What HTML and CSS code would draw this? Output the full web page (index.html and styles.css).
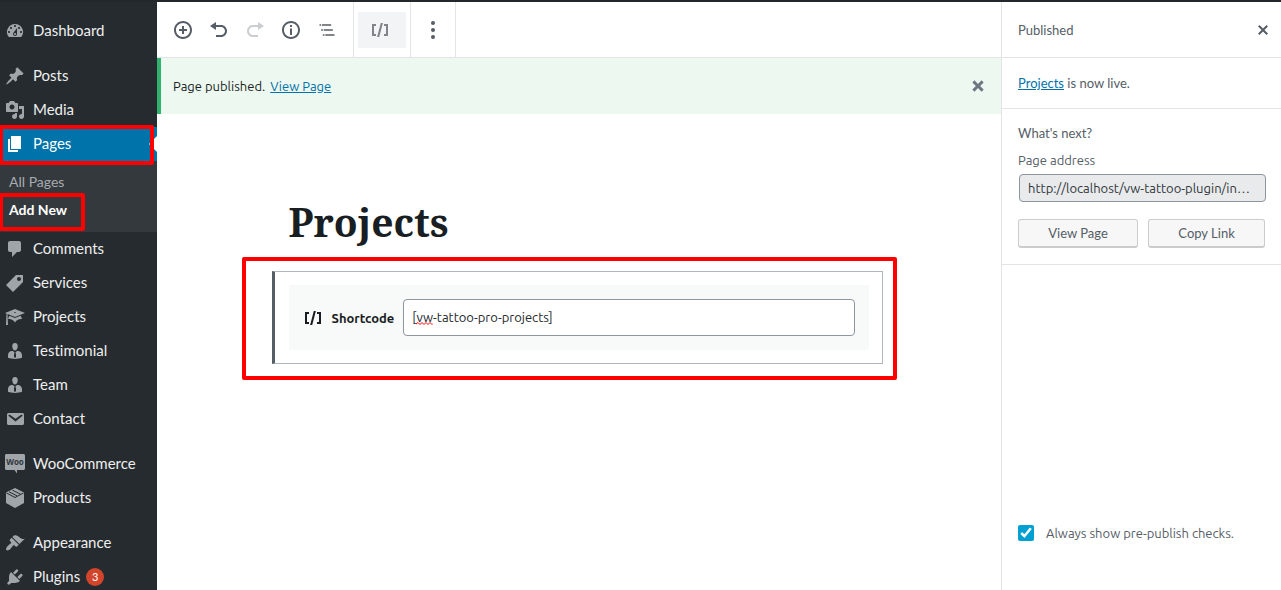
FILE: index.html
```html
<!DOCTYPE html>
<html lang="en">

<head>
    <meta charset="UTF-8">
    <meta name="viewport" content="width=device-width, initial-scale=1.0">
    <title>Edit Page</title>
    <link rel="stylesheet" href="styles.css">
</head>

<body>

    <div class="admin">
        <nav class="menu">
            <ul class="menu-group">
                <li><a class="menu-item" href="#">
                    <svg class="icon" viewBox="0 0 20 20"><path d="M3.76 16h12.48A7.998 7.998 0 0 0 10 3a7.998 7.998 0 0 0-6.24 13zM10 4c.55 0 1 .45 1 1s-.45 1-1 1-1-.45-1-1 .45-1 1-1zM6 6c.55 0 1 .45 1 1s-.45 1-1 1-1-.45-1-1 .45-1 1-1zm8 0c.55 0 1 .45 1 1s-.45 1-1 1-1-.45-1-1 .45-1 1-1zm-5.37 5.55L12 7v6c0 1.1-.9 2-2 2s-2-.9-2-2c0-.57.24-1.08.63-1.45zM4 10c.55 0 1 .45 1 1s-.45 1-1 1-1-.45-1-1 .45-1 1-1zm12 0c.55 0 1 .45 1 1s-.45 1-1 1-1-.45-1-1 .45-1 1-1zm-5 3c0-.55-.45-1-1-1s-1 .45-1 1 .45 1 1 1 1-.45 1-1z"/></svg>
                    <span>Dashboard</span></a></li>
            </ul>
            <ul class="menu-group">
                <li><a class="menu-item" href="#">
                    <svg class="icon" viewBox="0 0 20 20"><path d="M10.44 3.02l1.82-1.82 6.36 6.35-1.83 1.82c-1.05-.68-2.48-.57-3.41.36l-.75.75c-.92.93-1.04 2.35-.35 3.41l-1.83 1.82-2.41-2.41-2.8 2.79c-.42.42-3.38 2.71-3.8 2.29s1.86-3.39 2.28-3.81l2.79-2.79L4.1 9.36l1.83-1.82c1.05.69 2.48.57 3.4-.36l.75-.75c.93-.92 1.05-2.35.36-3.41z"/></svg>
                    <span>Posts</span></a></li>
                <li><a class="menu-item" href="#">
                    <svg class="icon" viewBox="0 0 20 20"><path d="M13 11V4c0-.55-.45-1-1-1h-1.67L9 1H5L3.67 3H2c-.55 0-1 .45-1 1v7c0 .55.45 1 1 1h10c.55 0 1-.45 1-1zM7 4.5c1.38 0 2.5 1.12 2.5 2.5S8.38 9.5 7 9.5 4.5 8.38 4.5 7 5.62 4.5 7 4.5zM14 6h5v10.5c0 1.38-1.12 2.5-2.5 2.5S14 17.88 14 16.5s1.12-2.5 2.5-2.5c.17 0 .34.02.5.05V9h-3V6zm-4 8.05V13h2v3.5c0 1.38-1.12 2.5-2.5 2.5S7 17.88 7 16.5 8.12 14 9.5 14c.17 0 .34.02.5.05z"/></svg>
                    <span>Media</span></a></li>
                <li class="current">
                    <a class="menu-item" href="#">
                    <svg class="icon" viewBox="0 0 20 20"><path d="M6 15V2h10v13H6zm-1 1h8v2H3V5h2v11z"/></svg>
                    <span>Pages</span></a>
                    <div class="mark mark-pages"></div>
                    <ul class="submenu">
                        <li><a href="#">All Pages</a></li>
                        <li class="active"><a href="#">Add New</a><div class="mark mark-add"></div></li>
                    </ul>
                </li>
                <li><a class="menu-item" href="#">
                    <svg class="icon" viewBox="0 0 20 20"><path d="M5 2h9c1.1 0 2 .9 2 2v7c0 1.1-.9 2-2 2h-2l-5 5v-5H5c-1.1 0-2-.9-2-2V4c0-1.1.9-2 2-2z"/></svg>
                    <span>Comments</span></a></li>
                <li><a class="menu-item" href="#">
                    <svg class="icon" viewBox="0 0 20 20"><path d="M11 2h7v7L8 19l-7-7zm3 6c1.1 0 2-.9 2-2s-.9-2-2-2-2 .9-2 2 .9 2 2 2z"/></svg>
                    <span>Services</span></a></li>
                <li><a class="menu-item" href="#">
                    <svg class="icon" viewBox="0 0 20 20"><path d="M10 10L2.54 7.02 3 18H1l.48-11.41L0 6l10-4 10 4zm0-5c-.55 0-1 .22-1 .5s.45.5 1 .5 1-.22 1-.5-.45-.5-1-.5zm0 6l5.57-2.23c.71.94 1.2 2.07 1.36 3.3-.3-.04-.61-.07-.93-.07-2.55 0-4.78 1.37-6 3.41C8.78 13.37 6.55 12 4 12c-.32 0-.63.03-.93.07.16-1.23.65-2.36 1.36-3.3z"/></svg>
                    <span>Projects</span></a></li>
                <li><a class="menu-item" href="#">
                    <svg class="icon" viewBox="0 0 20 20"><path d="M10 2c-2 0-3 1.600-2.700 4 .3 1.900 1.300 3.500 2.700 3.500s2.400-1.600 2.700-3.500C13 3.600 12 2 10 2zM8 10l1.670 1.670L9 13v3l1.020 1.080L11 16v-3l-.68-1.330L11.970 10c.77 0 2.200.07 2.900.52 1.500 1 2.130 2.300 2.130 3.860v2.490c-1.800.7-4.500 1.130-7 1.130s-5.200-.43-7-1.130v-2.490c0-1.600.5-2.900 1.960-3.830C5.660 10.120 7.190 10 8 10z"/></svg>
                    <span>Testimonial</span></a></li>
                <li><a class="menu-item" href="#">
                    <svg class="icon" viewBox="0 0 20 20"><path d="M10 2c-2 0-3 1.600-2.700 4 .3 1.900 1.300 3.500 2.700 3.500s2.400-1.600 2.700-3.500C13 3.600 12 2 10 2zM8 10l1.670 1.670L9 13v3l1.020 1.080L11 16v-3l-.68-1.330L11.970 10c.77 0 2.200.07 2.900.52 1.500 1 2.130 2.300 2.130 3.860v2.490c-1.800.7-4.500 1.130-7 1.130s-5.200-.43-7-1.130v-2.490c0-1.600.5-2.900 1.960-3.830C5.660 10.120 7.190 10 8 10z"/></svg>
                    <span>Team</span></a></li>
                <li><a class="menu-item" href="#">
                    <svg class="icon" viewBox="0 0 20 20"><path d="M3.500 4h14c.8 0 1.500.7 1.500 1.500v9c0 .8-.7 1.500-1.500 1.500h-14c-.8 0-1.500-.7-1.500-1.500v-9C2 4.700 2.700 4 3.500 4zm7 8.600l6.800-5.500c.3-.3.4-.7.100-1.100-.3-.4-.8-.4-1.200-.2l-5.700 3.900-5.700-3.900c-.4-.2-.9-.2-1.200.2-.3.4-.1.800.1 1.100z"/></svg>
                    <span>Contact</span></a></li>
            </ul>
            <ul class="menu-group">
                <li><a class="menu-item" href="#">
                    <svg class="icon" viewBox="0 0 20 20"><path d="M1.500 0h17c.8 0 1.500.7 1.500 1.500v13c0 .8-.7 1.500-1.500 1.500H12l0 3.500L9.500 16h-8C.7 16 0 15.300 0 14.500v-13C0 .7.7 0 1.500 0z"/><text class="woo" x="10" y="11" text-anchor="middle">Woo</text></svg>
                    <span>WooCommerce</span></a></li>
                <li><a class="menu-item" href="#">
                    <svg class="icon" viewBox="0 0 20 20"><path d="M10 0l9 4.500v10.500l-9 5-9-5V4.500z"/><path class="cut" d="M1.500 5l8.500 4.500L18.500 5M4 3.800l8 4M7.500 2.200l8 4"/></svg>
                    <span>Products</span></a></li>
            </ul>
            <ul class="menu-group">
                <li><a class="menu-item" href="#">
                    <svg class="icon" viewBox="0 0 20 20"><path d="M14.48 11.06L7.41 3.99l1.500-1.500c.5-.56 2.300-.47 3.510.32 1.210.8 1.430 1.280 2.910 2.100 1.180.64 2.450 1.260 4.450.85zm-.71.71L6.700 4.700 4.930 6.470c-.39.39-.39 1.020 0 1.410l1.060 1.060c.39.39.39 1.030 0 1.420-.6.6-1.430 1.110-2.210 1.690-.35.26-.7.53-1.010.84C1.430 14.230.4 16.080 1.400 17.070c.99 1 2.840-.03 4.180-1.360.31-.31.58-.66.85-1.020.57-.78 1.080-1.610 1.690-2.210.39-.39 1.020-.39 1.410 0l1.060 1.060c.39.39 1.020.39 1.410 0z"/></svg>
                    <span>Appearance</span></a></li>
                <li><a class="menu-item" href="#">
                    <svg class="icon" viewBox="0 0 20 20"><path d="M13.11 4.36L9.870 7.600 8 5.730l3.240-3.240c.35-.34 1.050-.2 1.560.32.52.51.66 1.210.31 1.550zm-8 1.770l.91-1.120 9.010 9.010-1.190.84c-.71.71-2.630 1.160-3.820 1.160H6.140L4.900 17.260c-.59.59-1.540.59-2.120 0-.59-.58-.59-1.530 0-2.120l1.240-1.240v-3.880c0-1.130.4-3.190 1.090-3.890zm7.260 3.970l3.240-3.240c.34-.35 1.040-.21 1.550.31.52.51.66 1.210.31 1.550l-3.240 3.250z"/></svg>
                    <span>Plugins</span><b class="count">3</b></a></li>
            </ul>
        </nav>

        <main class="editor">
            <div class="toolbar">
                <div class="tools">
                    <button type="button" aria-label="Add block"><svg class="icon" viewBox="0 0 20 20"><path d="M10 1c-5 0-9 4-9 9s4 9 9 9 9-4 9-9-4-9-9-9zm0 16c-3.900 0-7-3.100-7-7s3.100-7 7-7 7 3.100 7 7-3.100 7-7 7zm1-11H9v3H6v2h3v3h2v-3h3V9h-3V6z"/></svg></button>
                    <button type="button" aria-label="Undo"><svg class="icon" viewBox="0 0 20 20"><path d="M12 5H7V2L1 6l6 4V7h5c2.200 0 4 1.800 4 4s-1.800 4-4 4H7v2h5c3.300 0 6-2.700 6-6s-2.700-6-6-6z"/></svg></button>
                    <button type="button" aria-label="Redo" disabled><svg class="icon" viewBox="0 0 20 20"><path d="M8 5h5V2l6 4-6 4V7H8c-2.200 0-4 1.800-4 4s1.800 4 4 4h5v2H8c-3.300 0-6-2.700-6-6s2.700-6 6-6z"/></svg></button>
                    <button type="button" aria-label="Content structure"><svg class="icon" viewBox="0 0 20 20"><path d="M10 1c-5 0-9 4-9 9s4 9 9 9 9-4 9-9-4-9-9-9zm0 16c-3.900 0-7-3.100-7-7s3.100-7 7-7 7 3.100 7 7-3.100 7-7 7zM9 5h2v2H9zm0 3.500h2V15H9z"/></svg></button>
                    <button type="button" aria-label="Block navigation"><svg class="icon" viewBox="0 0 24 24"><path d="M5 5H3v2h2V5zm3 8h11v-2H8v2zm9-8H6v2h11V5zM7 11H5v2h2v-2zm0 8h2v-2H7v2zm3-2v2h11v-2H10z"/></svg></button>
                </div>
                <div class="tools block-type">
                    <button type="button" class="wide" aria-label="Shortcode"><svg class="icon" viewBox="0 0 20 20"><path d="M6 14H4V6h2V4H2v12h4M7.100 17h2.100l3.700-14h-2.100M14 4v2h2v8h-2v2h4V4"/></svg></button>
                </div>
                <div class="tools more">
                    <button type="button" aria-label="More options"><svg class="icon" viewBox="0 0 20 20"><circle cx="10" cy="3" r="2"/><circle cx="10" cy="10" r="2"/><circle cx="10" cy="17" r="2"/></svg></button>
                </div>
            </div>

            <div class="notice">
                <p>Page published. <a href="#">View Page</a></p>
                <button type="button" class="close" aria-label="Dismiss"><svg class="icon" viewBox="0 0 20 20"><path d="M12.120 10l3.530 3.530-2.120 2.120L10 12.120l-3.540 3.540-2.120-2.120L7.880 10 4.340 6.460l2.120-2.120L10 7.880l3.540-3.530 2.120 2.120z"/></svg></button>
            </div>

            <div class="content">
                <h1>Projects</h1>
                <div class="block">
                    <div class="shortcode">
                        <label for="shortcode"><svg class="icon" viewBox="0 0 20 20"><path d="M6 14H4V6h2V4H2v12h4M7.100 17h2.100l3.700-14h-2.100M14 4v2h2v8h-2v2h4V4"/></svg>Shortcode</label>
                        <div class="field">
                            <input type="text" id="shortcode" value="[vw-tattoo-pro-projects]" spellcheck="false">
                            <svg class="squiggle" viewBox="0 0 17 3"><path d="M0 2l2-1.500 2 2 2-2 2 2 2-2 2 2 2-2 2 2 1-1"/></svg>
                        </div>
                    </div>
                    <div class="mark mark-block"></div>
                </div>
            </div>
        </main>

        <aside class="panel">
            <div class="panel-header">
                <span>Published</span>
                <button type="button" class="close" aria-label="Close panel"><svg class="icon" viewBox="0 0 20 20"><path d="M14.950 6.460L11.410 10l3.540 3.540-1.410 1.410L10 11.420l-3.530 3.530-1.420-1.420L8.580 10 5.050 6.470l1.420-1.420L10 8.580l3.540-3.530z"/></svg></button>
            </div>
            <p class="live"><a href="#">Projects</a> is now live.</p>
            <div class="next">
                <p>What's next?</p>
                <label for="address">Page address</label>
                <input type="text" id="address" value="http://localhost/vw-tattoo-plugin/index.php/projects/" readonly>
                <div class="actions">
                    <button type="button">View Page</button>
                    <button type="button">Copy Link</button>
                </div>
            </div>
            <div class="checks">
                <input type="checkbox" id="checks" checked>
                <label for="checks">Always show pre-publish checks.</label>
            </div>
        </aside>
    </div>

</body>

</html>
```
FILE: styles.css
```css
* {
    box-sizing: border-box;
}

body {
    margin: 0;
    font-family: Ubuntu, "Noto Sans", sans-serif;
    font-size: 13px;
    line-height: 20px;
    font-variant-ligatures: none;
    color: #191e23;
    background-color: #fff;
}

ul,
p,
h1 {
    margin: 0;
    padding: 0;
}

ul {
    list-style: none;
}

a {
    color: #0073aa;
}

button {
    font: inherit;
    padding: 0;
    border: none;
    background: none;
    color: #555d66;
}

.icon {
    display: block;
    flex: none;
    width: 20px;
    height: 20px;
    fill: currentColor;
}

.admin {
    display: flex;
    height: 100vh;
    border-top: 2px solid #23282d;
    overflow: hidden;
}

/* left menu */
.menu {
    flex: none;
    width: 157px;
    padding-top: 12px;
    background-color: #262b30;
    font-family: Muli, Lato, sans-serif;
    font-size: 15px;
}

.menu-group {
    margin-bottom: 11px;
}

.menu-item {
    display: flex;
    align-items: center;
    height: 34px;
    padding-left: 5px;
    gap: 8px;
    color: #eee;
    text-decoration: none;
}

.menu-item span {
    padding-bottom: 2px;
}

.menu-item .icon {
    color: #a0a5aa;
}

.woo {
    font: bold 8px "Open Sans", sans-serif;
    fill: #32373c;
}

.cut {
    fill: none;
    stroke: #262b30;
    stroke-width: 1;
}

.count {
    width: 18px;
    height: 18px;
    margin-left: -2px;
    border-radius: 50%;
    background-color: #d2452b;
    color: #fff;
    font-size: 11px;
    font-weight: normal;
    line-height: 18px;
    text-align: center;
}

.current {
    position: relative;
}

.current .menu-item {
    background-color: #0073aa;
    color: #fff;
}

.current .menu-item .icon {
    color: #fff;
}

.current .menu-item::after {
    content: "";
    margin-left: auto;
    border: 8px solid transparent;
    border-left: none;
    border-right-color: #fff;
}

.submenu {
    padding: 7px 0 8px;
    background-color: #34393e;
    font-size: 14px;
}

.submenu li {
    position: relative;
}

.submenu a {
    display: block;
    padding-left: 9px;
    line-height: 28px;
    color: #a7abae;
    text-decoration: none;
}

.submenu .active a {
    color: #fff;
    font-weight: bold;
}

/* red highlight boxes */
.mark {
    position: absolute;
    border: 4px solid #f00;
    border-radius: 2px;
    pointer-events: none;
}

.mark-pages {
    top: -2px;
    left: -1px;
    right: 3px;
    height: 40px;
}

.mark-add {
    top: -3px;
    left: -1px;
    width: 86px;
    height: 38px;
}

.mark-block {
    inset: -15px -15px -17px -33px;
}

/* editor */
.editor {
    flex: 1;
    min-width: 0;
}

.toolbar {
    display: flex;
    height: 56px;
    border-bottom: 1px solid #e2e4e7;
}

.tools {
    display: flex;
    align-items: center;
    padding: 0 8px;
    border-right: 1px solid #e2e4e7;
}

.tools button {
    display: flex;
    align-items: center;
    justify-content: center;
    width: 36px;
    height: 36px;
}

.tools button:disabled {
    opacity: 0.3;
}

.tools.block-type {
    padding: 0 4px;
}

.tools .wide {
    width: 48px;
    padding-right: 4px;
    background-color: #f3f4f5;
    color: #7e8489;
}

.tools.more {
    padding: 0 4px;
}

.notice {
    display: flex;
    align-items: center;
    justify-content: space-between;
    height: 56px;
    padding: 0 13px 0 12px;
    border-left: 4px solid #31b36f;
    background-color: #edf8f1;
}

.notice a {
    margin-left: 2px;
}

.close {
    color: #555d66;
}

.notice .close {
    color: #6c7781;
}

.content {
    max-width: 611px;
    margin: 0 auto;
    padding-top: 80px;
}

h1 {
    padding-left: 15px;
    font-family: "Noto Serif", "DejaVu Serif Condensed", serif;
    font-size: 39px;
    line-height: 56px;
}

.block {
    position: relative;
    margin-top: 21px;
    margin-right: 2px;
    margin-left: -2px;
    padding: 13px 13px 13px 14px;
    border: 1px solid #b0b6bc;
    border-left: 3px solid #555d66;
}

.shortcode {
    display: flex;
    align-items: center;
    gap: 9px;
    padding: 14px;
    background-color: #f8f9f9;
}

.shortcode label {
    display: flex;
    align-items: center;
    gap: 9px;
    font-weight: bold;
}

.field {
    position: relative;
    flex: 1;
}

.field input {
    display: block;
    width: 100%;
    height: 37px;
    padding: 0 8px 1px;
    border: 1px solid #8d96a0;
    border-radius: 4px;
    font: inherit;
    color: #23282d;
}

.squiggle {
    position: absolute;
    top: 23px;
    left: 13px;
    width: 17px;
    height: 3px;
    fill: none;
    stroke: #f00;
}

/* right panel */
.panel {
    display: flex;
    flex-direction: column;
    flex: none;
    width: 280px;
    border-left: 1px solid #e2e4e7;
    font-family: Muli, Lato, sans-serif;
    color: #555d66;
}

.panel-header {
    display: flex;
    align-items: center;
    justify-content: space-between;
    height: 56px;
    padding: 0 8px 0 16px;
    border-bottom: 1px solid #e2e4e7;
}

.live {
    padding: 15px 16px;
    border-bottom: 1px solid #e2e4e7;
}

.next {
    padding: 14px 16px 16px;
    border-bottom: 1px solid #e2e4e7;
}

.next label {
    display: block;
    margin: 7px 0 4px;
    font-family: Ubuntu, "Noto Sans", sans-serif;
}

.next input {
    display: block;
    width: 100%;
    height: 28px;
    margin-left: 1px;
    padding: 0 8px;
    border: 1px solid #8d96a0;
    border-radius: 4px;
    background-color: #e8eaeb;
    font-family: Ubuntu, "Noto Sans", sans-serif;
    font-size: 13px;
    color: #32373c;
    text-overflow: ellipsis;
}

.actions {
    display: flex;
    gap: 10px;
    margin-top: 17px;
}

.actions button {
    flex: auto;
    height: 29px;
    border: 1px solid #ccc;
    border-bottom-width: 2px;
    border-radius: 3px;
    background-color: #f7f7f7;
}

.checks {
    display: flex;
    align-items: center;
    gap: 12px;
    margin-top: auto;
    padding: 0 16px 47px;
    font-family: Ubuntu, "Noto Sans", sans-serif;
}

.checks input {
    width: 16px;
    height: 16px;
    margin: 0;
    accent-color: #00a0d2;
}
```
